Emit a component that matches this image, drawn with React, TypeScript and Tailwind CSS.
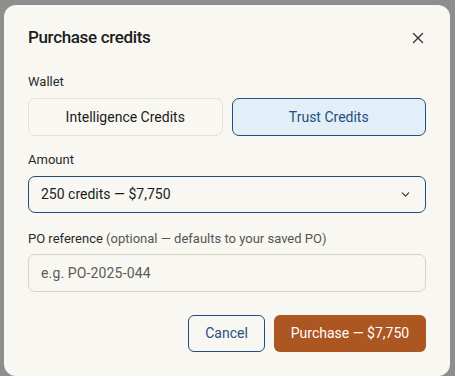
import { X, ChevronDown } from "lucide-react";

const App = () => {
  return (
    <div
      className="w-[455px] h-[376px] bg-[#8e8e8e] pt-[5px] pl-[4px] overflow-hidden"
      style={{ fontFamily: "Roboto, 'Noto Sans', sans-serif" }}
    >
      <div className="w-[446px] h-[371px] bg-[#f8f7f2] rounded-[12px] px-6 pt-[19px]">
        {/* header */}
        <div className="flex items-center justify-between h-7">
          <h2 className="text-[17px] font-medium tracking-[-0.02em] text-[#1c1c1c]">
            Purchase credits
          </h2>
          <X className="w-[18px] h-[18px] text-[#333] -mr-[1px]" strokeWidth={1.75} />
        </div>

        {/* wallet */}
        <div className="mt-[20px] text-[13px] leading-5 text-[#2a2a2a]">Wallet</div>
        <div className="mt-[6px] grid grid-cols-2 gap-[9px]">
          <button className="h-[38px] rounded-[7px] border border-[#e4e1d8] bg-[#f8f7f2] text-[14px] text-[#1c1c1c]">
            Intelligence Credits
          </button>
          <button className="h-[38px] rounded-[7px] border border-[#1f4f7d] bg-[#e2eef8] text-[14px] text-[#1f4f7d]">
            Trust Credits
          </button>
        </div>

        {/* amount */}
        <div className="mt-[14px] text-[13px] leading-5 text-[#2a2a2a]">Amount</div>
        <div className="mt-[6px] h-[37px] rounded-[7px] border border-[#1f4f7d] flex items-center justify-between pl-3 pr-[13px]">
          <span className="text-[14px] text-[#1c1c1c]">250 credits — $7,750</span>
          <ChevronDown className="w-[13px] h-[13px] text-[#333]" strokeWidth={2} />
        </div>

        {/* po */}
        <div className="mt-[16px] text-[13px] leading-5 text-[#2a2a2a]">
          PO reference <span className="text-[#555]">(optional — defaults to your saved PO)</span>
        </div>
        <div className="mt-[5px] h-[38px] rounded-[7px] border border-[#d7d3c4] flex items-center pl-3">
          <span className="text-[14px] tracking-[0.01em] text-[#5b5b5b]">e.g. PO-2025-044</span>
        </div>

        {/* actions */}
        <div className="mt-[23px] flex justify-end gap-[9px]">
          <button className="h-[37px] w-[77px] rounded-[6px] border border-[#1f4f7d] text-[14px] text-[#1f4f7d]">
            Cancel
          </button>
          <button className="h-[37px] w-[152px] rounded-[6px] bg-[#ac5622] text-[14px] text-white">
            Purchase — $7,750
          </button>
        </div>
      </div>
    </div>
  );
};

export default App;
